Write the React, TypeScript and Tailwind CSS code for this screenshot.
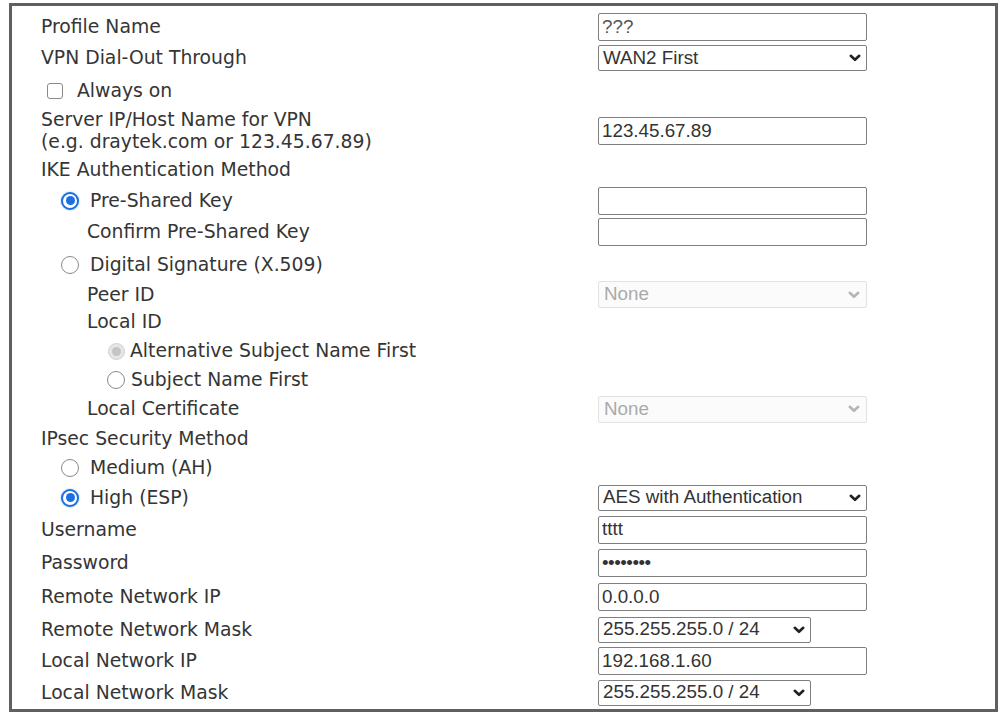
import React from "react";

const LABEL =
  "font-['DejaVu_Sans',Verdana,sans-serif] text-[18.8px] text-[#353535] leading-[22px] whitespace-nowrap";
const CTRL = "font-['Liberation_Sans',Arial,sans-serif] text-[18.8px] leading-none whitespace-nowrap";

function Row({
  h,
  children,
  control,
}: {
  h: string;
  children: React.ReactNode;
  control?: React.ReactNode;
}) {
  return (
    <div className={`grid grid-cols-[557px_1fr] items-center ${h}`}>
      <div className={`flex items-center ${LABEL}`}>{children}</div>
      <div className="flex items-center">{control}</div>
    </div>
  );
}

function TextBox({ value, extra }: { value?: string; extra?: string }) {
  return (
    <div
      className={`w-[269px] h-[28px] border border-[#7f7f7f] rounded-[2px] bg-white flex items-center pl-[3px] text-[#333] ${CTRL} ${extra ?? ""}`}
    >
      {value}
    </div>
  );
}

function Chevron({ color }: { color: string }) {
  return (
    <svg width="12" height="8" viewBox="0 0 12 8" className="block shrink-0">
      <polyline
        points="1.8,1.8 6,5.8 10.2,1.8"
        fill="none"
        stroke={color}
        strokeWidth="2.6"
        strokeLinecap="round"
        strokeLinejoin="round"
      />
    </svg>
  );
}

function Select({ value, small }: { value: string; small?: boolean }) {
  return (
    <div
      className={`${small ? "w-[213px]" : "w-[269px]"} h-[26px] border border-[#7f7f7f] rounded-[2px] bg-white flex items-center justify-between pl-[4px] pr-[5px] text-[#333] ${CTRL}`}
    >
      <span>{value}</span>
      <Chevron color="#222" />
    </div>
  );
}

function DisabledSelect({ value }: { value: string }) {
  return (
    <div
      className={`w-[269px] h-[27px] border border-[#e2e2e2] rounded-[2px] bg-[#fbfbfb] flex items-center justify-between pl-[5px] pr-[6px] text-[#aaaaaa] ${CTRL}`}
    >
      <span>{value}</span>
      <Chevron color="#b5b5b5" />
    </div>
  );
}

function RadioOn() {
  return (
    <span className="w-[18px] h-[18px] rounded-full border-2 border-[#1b6fe3] bg-white flex items-center justify-center shrink-0 shadow-[0_0_2px_rgba(27,111,227,0.5)]">
      <span className="block w-[9px] h-[9px] rounded-full bg-[#1b6fe3]" />
    </span>
  );
}

function RadioOff() {
  return <span className="block w-[18px] h-[18px] rounded-full border border-[#8a8a8a] bg-white shrink-0" />;
}

function RadioDisabledOn() {
  return (
    <span className="w-[17px] h-[17px] rounded-full border border-[#d0d0d0] bg-[#e6e6e6] flex items-center justify-center shrink-0">
      <span className="block w-[9px] h-[9px] rounded-full bg-[#c4c4c4]" />
    </span>
  );
}

export default function App() {
  return (
    <div className="w-[1001px] h-[712px] bg-white overflow-hidden">
      <div className="h-[3px]" />
      <div className="ml-[9px] w-[989px] border-[3px] border-[#606060] pt-[6px] pb-[1px] pl-[29px]">
        <Row h="h-[30px]" control={<TextBox value="???" extra="text-[#555]" />}>
          Profile Name
        </Row>
        <Row h="h-[32px]" control={<Select value="WAN2 First" />}>
          VPN Dial-Out Through
        </Row>
        <Row h="h-[34px]">
          <span className="block ml-[6px] w-[16px] h-[16px] border border-[#8a8a8a] rounded-[3px] bg-white shrink-0" />
          <span className="ml-[14px]">Always on</span>
        </Row>
        <Row h="h-[46px]" control={<TextBox value="123.45.67.89" />}>
          <div className="flex flex-col">
            <span>Server IP/Host Name for VPN</span>
            <span>(e.g. draytek.com or 123.45.67.89)</span>
          </div>
        </Row>
        <Row h="h-[32px]">IKE Authentication Method</Row>
        <Row h="h-[29px]" control={<TextBox />}>
          <span className="ml-[20px]">
            <RadioOn />
          </span>
          <span className="ml-[11px]">Pre-Shared Key</span>
        </Row>
        <Row h="h-[34px]" control={<TextBox />}>
          <span className="ml-[46px]">Confirm Pre-Shared Key</span>
        </Row>
        <Row h="h-[32px]">
          <span className="ml-[20px]">
            <RadioOff />
          </span>
          <span className="ml-[11px]">Digital Signature (X.509)</span>
        </Row>
        <Row h="h-[26px]" control={<DisabledSelect value="None" />}>
          <span className="ml-[46px]">Peer ID</span>
        </Row>
        <Row h="h-[29px]">
          <span className="ml-[46px]">Local ID</span>
        </Row>
        <Row h="h-[30px]">
          <span className="ml-[67px]">
            <RadioDisabledOn />
          </span>
          <span className="ml-[5px]">Alternative Subject Name First</span>
        </Row>
        <Row h="h-[28px]">
          <span className="ml-[66px]">
            <RadioOff />
          </span>
          <span className="ml-[6px]">Subject Name First</span>
        </Row>
        <Row h="h-[30px]" control={<DisabledSelect value="None" />}>
          <span className="ml-[46px]">Local Certificate</span>
        </Row>
        <Row h="h-[30px]">IPsec Security Method</Row>
        <Row h="h-[28px]">
          <span className="ml-[20px]">
            <RadioOff />
          </span>
          <span className="ml-[11px]">Medium (AH)</span>
        </Row>
        <Row h="h-[31px]" control={<Select value="AES with Authentication" />}>
          <span className="ml-[20px]">
            <RadioOn />
          </span>
          <span className="ml-[11px]">High (ESP)</span>
        </Row>
        <Row h="h-[33px]" control={<TextBox value="tttt" />}>
          Username
        </Row>
        <Row h="h-[34px]" control={<TextBox value="••••••••" extra="text-[#222] tracking-[-0.5px]" />}>
          Password
        </Row>
        <Row h="h-[34px]" control={<TextBox value="0.0.0.0" />}>
          Remote Network IP
        </Row>
        <Row h="h-[31px]" control={<Select value="255.255.255.0 / 24" small />}>
          Remote Network Mask
        </Row>
        <Row h="h-[32px]" control={<TextBox value="192.168.1.60" />}>
          Local Network IP
        </Row>
        <Row h="h-[31px]" control={<Select value="255.255.255.0 / 24" small />}>
          Local Network Mask
        </Row>
      </div>
    </div>
  );
}
